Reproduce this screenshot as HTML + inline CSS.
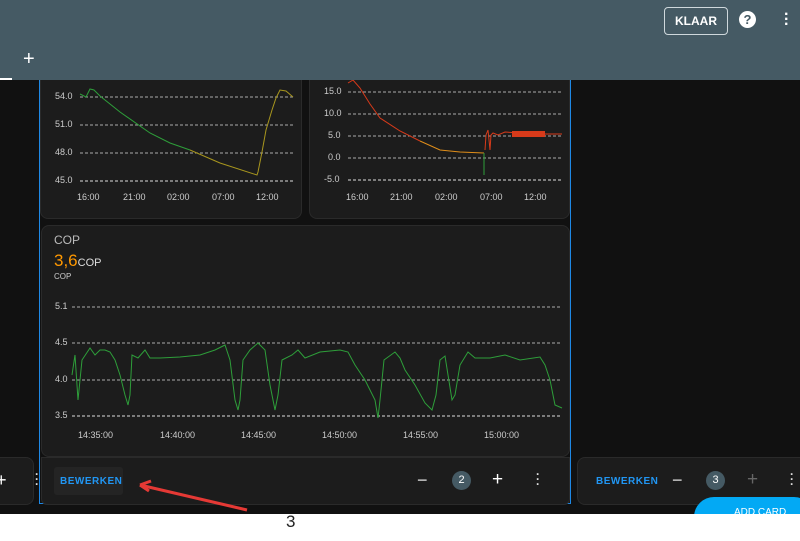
<!DOCTYPE html><html><head><style>
body{margin:0;width:800px;height:541px;overflow:hidden;background:#fff;font-family:"Liberation Sans",sans-serif;position:relative}
.hdr{position:absolute;left:0;top:0;width:800px;height:80px;background:#455a64;z-index:10}
.dark{position:absolute;left:0;top:80px;width:800px;height:434px;background:#111}
.card{position:absolute;background:#1c1c1c;border:1px solid #2a2a2a;border-radius:8px}
.t{position:absolute;color:#ccc;font-size:9px}
.btn{position:absolute;color:#2196f3;font-size:10px;font-weight:bold;letter-spacing:.5px}
</style></head><body>
<div class="hdr">
<div style="position:absolute;left:664px;top:7px;width:62px;height:26px;border:1px solid #cfd8dc;border-radius:4px;color:#fff;font-size:12px;font-weight:bold;text-align:center;line-height:26px">KLAAR</div>
<div style="position:absolute;left:739px;top:11px;width:17px;height:17px;border-radius:50%;background:#fff;color:#455a64;font-size:13px;font-weight:bold;text-align:center;line-height:17px">?</div>
<div style="position:absolute;left:784px;top:12px;color:#fff;font-size:16px;line-height:5px;font-weight:bold">·<br>·<br>·</div>
<div style="position:absolute;left:23px;top:48px;color:#fff;font-size:20px">+</div>
<div style="position:absolute;left:0;top:78px;width:12px;height:2px;background:#fff"></div>
</div>
<div class="dark"></div>
<div style="position:absolute;left:39px;top:80px;width:530px;height:423px;border:1px solid #1e88e5;border-top:none"></div>
<div class="card" style="left:-10px;top:457px;width:42px;height:46px"></div>
<div class="t" style="left:-4px;top:470px;font-size:18px;color:#fff">+</div>
<div class="card" style="left:40px;top:70px;width:260px;height:147px"></div>
<div class="card" style="left:309px;top:70px;width:259px;height:147px"></div>
<div class="card" style="left:41px;top:225px;width:527px;height:230px"></div>
<div class="card" style="left:41px;top:457px;width:527px;height:46px;border-radius:0 0 6px 6px"></div>
<div class="card" style="left:577px;top:457px;width:240px;height:46px"></div>
<svg style="position:absolute;left:0;top:0" width="800" height="541">
<g stroke="#aaa" stroke-dasharray="3,2" stroke-width="1">
<line x1="80" y1="97" x2="293" y2="97"/><line x1="80" y1="125" x2="293" y2="125"/><line x1="80" y1="153" x2="293" y2="153"/><line x1="80" y1="181" x2="293" y2="181" stroke="#ddd"/>
<line x1="348" y1="92" x2="562" y2="92"/><line x1="348" y1="114" x2="562" y2="114"/><line x1="348" y1="136" x2="562" y2="136"/><line x1="348" y1="158" x2="562" y2="158"/><line x1="348" y1="180" x2="562" y2="180" stroke="#ddd"/>
<line x1="72" y1="307" x2="562" y2="307"/><line x1="72" y1="343" x2="562" y2="343"/><line x1="72" y1="380" x2="562" y2="380"/><line x1="72" y1="416" x2="562" y2="416" stroke="#ddd"/>
</g>
<polyline fill="none" stroke="#2e9e3a" points="80,94 86,97 90,89 94,90 100,96 120,112 150,133 170,143 190,150"/>
<polyline fill="none" stroke="#a8961e" points="190,150 220,163 257,175 258,172 262,152 266,130 272,110 276,98 280,90 286,91 293,97"/>
<polyline fill="none" stroke="#d73a1a" points="348,83 353,80 360,88 370,104 380,118 400,131 420,141"/>
<polyline fill="none" stroke="#e08e1a" points="420,141 440,150 460,152 484,153"/>
<polyline fill="none" stroke="#2e9e3a" points="484,153 484,175"/>
<polyline fill="none" stroke="#d73a1a" points="485,150 486,135 488,130 489,140 490,150 491,135 493,133 498,135 505,132 520,133 540,134 562,134"/>
<rect x="512" y="131" width="33" height="6" fill="#d73a1a"/>
<polyline fill="none" stroke="#2e9e3a" points="72,375 75,355 78,400 82,360 90,348 95,355 100,350 105,350 110,352 115,360 120,375 125,395 128,405 130,395 132,355 138,358 145,350 150,358 160,358 180,357 200,355 215,350 225,345 230,360 235,400 238,410 240,400 243,360 250,350 258,343 265,350 270,385 275,410 278,395 282,360 292,355 298,350 305,358 320,352 340,350 348,352 355,365 365,380 375,400 378,418 380,400 384,360 395,352 400,358 405,370 415,385 425,403 432,410 436,395 440,360 445,356 452,400 455,395 460,365 468,352 475,358 490,358 505,355 520,360 540,357 545,365 550,380 555,405 562,408"/>
<path d="M247 510 L140 485 M140 485 L151 481 M140 485 L149 491" stroke="#e53935" stroke-width="3" fill="none"/>
</svg>
<div class="t" style="left:55px;top:91px">54.0</div><div class="t" style="left:55px;top:119px">51.0</div><div class="t" style="left:55px;top:147px">48.0</div><div class="t" style="left:55px;top:175px">45.0</div>
<div class="t" style="left:77px;top:192px">16:00</div><div class="t" style="left:123px;top:192px">21:00</div><div class="t" style="left:167px;top:192px">02:00</div><div class="t" style="left:212px;top:192px">07:00</div><div class="t" style="left:256px;top:192px">12:00</div>
<div class="t" style="left:324px;top:86px">15.0</div><div class="t" style="left:324px;top:108px">10.0</div><div class="t" style="left:328px;top:130px">5.0</div><div class="t" style="left:328px;top:152px">0.0</div><div class="t" style="left:324px;top:174px">-5.0</div>
<div class="t" style="left:346px;top:192px">16:00</div><div class="t" style="left:390px;top:192px">21:00</div><div class="t" style="left:435px;top:192px">02:00</div><div class="t" style="left:480px;top:192px">07:00</div><div class="t" style="left:524px;top:192px">12:00</div>
<div class="t" style="left:54px;top:233px;font-size:12px;color:#bbb">COP</div>
<div class="t" style="left:54px;top:251px;font-size:17px;color:#ff9800">3,6<span style="font-size:11px;color:#ddd">COP</span></div>
<div class="t" style="left:54px;top:272px;font-size:8px">COP</div>
<div class="t" style="left:55px;top:301px">5.1</div><div class="t" style="left:55px;top:337px">4.5</div><div class="t" style="left:55px;top:374px">4.0</div><div class="t" style="left:55px;top:410px">3.5</div>
<div class="t" style="left:78px;top:430px">14:35:00</div><div class="t" style="left:160px;top:430px">14:40:00</div><div class="t" style="left:241px;top:430px">14:45:00</div><div class="t" style="left:322px;top:430px">14:50:00</div><div class="t" style="left:403px;top:430px">14:55:00</div><div class="t" style="left:484px;top:430px">15:00:00</div>
<div style="position:absolute;left:54px;top:467px;width:69px;height:28px;background:#242424;border-radius:3px"></div>
<div class="btn" style="left:60px;top:476px">BEWERKEN</div>
<div class="t" style="left:417px;top:470px;font-size:18px;color:#ddd">−</div>
<div style="position:absolute;left:452px;top:471px;width:19px;height:19px;border-radius:50%;background:#455a64;color:#fff;font-size:11px;text-align:center;line-height:19px">2</div>
<div class="t" style="left:492px;top:469px;font-size:19px;color:#fff">+</div>
<div class="t" style="left:536px;top:472px;font-size:12px;line-height:5px;color:#ddd;font-weight:bold">·<br>·<br>·</div>
<div class="t" style="left:35px;top:472px;font-size:12px;line-height:5px;color:#ddd;font-weight:bold">·<br>·<br>·</div>
<div class="btn" style="left:596px;top:476px">BEWERKEN</div>
<div class="t" style="left:672px;top:470px;font-size:18px;color:#ddd">−</div>
<div style="position:absolute;left:706px;top:471px;width:19px;height:19px;border-radius:50%;background:#455a64;color:#fff;font-size:11px;text-align:center;line-height:19px">3</div>
<div class="t" style="left:747px;top:469px;font-size:19px;color:#666">+</div>
<div class="t" style="left:790px;top:472px;font-size:12px;line-height:5px;color:#ddd;font-weight:bold">·<br>·<br>·</div>
<div style="position:absolute;left:694px;top:497px;width:120px;height:17px;overflow:hidden"><div style="width:120px;height:40px;background:#03a9f4;border-radius:20px;color:#fff;font-size:10px;padding:10px 0 0 40px;box-sizing:border-box">ADD CARD</div></div>
<div style="position:absolute;left:286px;top:512px;font-size:17px;color:#222">3</div>
</body></html>
